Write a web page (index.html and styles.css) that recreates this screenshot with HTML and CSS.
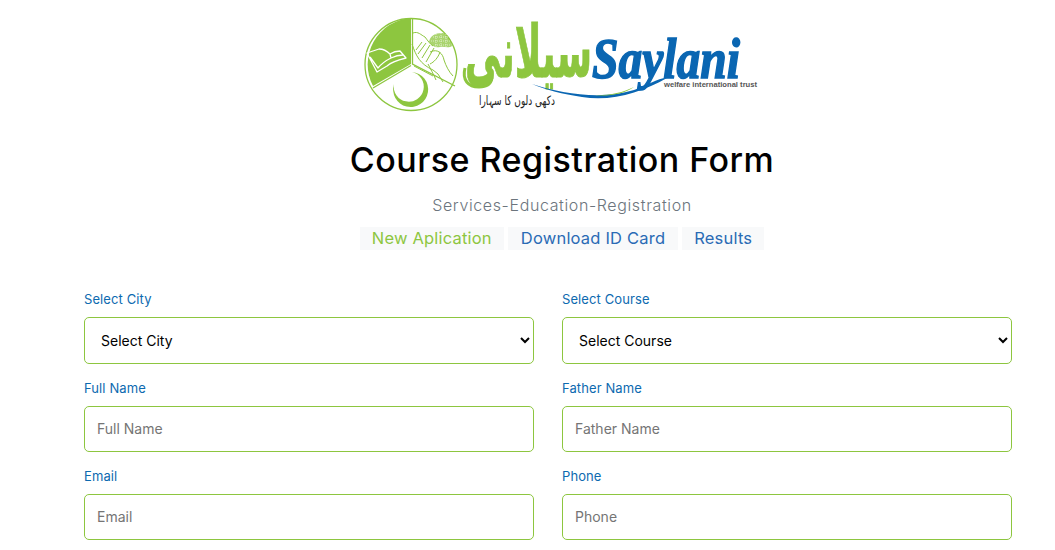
FILE: index.html
```html
<!DOCTYPE html>
<html lang="en">
<head>
<meta charset="utf-8">
<title>Course Registration Form</title>
<link rel="stylesheet" href="styles.css">
</head>
<body>
<header class="masthead">
  <svg class="logo" viewBox="350 5 420 120" width="420" height="120" aria-label="Saylani Welfare International Trust logo">
    <path d="M409 18V64L371 86A46.500 46.500 0 0 1 409 18Z" fill="#8dc63f"/>
    <circle cx="409" cy="64.500" r="46" fill="none" stroke="#8dc63f" stroke-width="1.300"/>
    <path d="M410.500 18V64L453 86M409 65.500L371 88" fill="none" stroke="#8dc63f" stroke-width="1.300"/>
    <path d="M365 53L377 49C381 49 385 51 388 54C391 52 394 51 398 51L404 58C396 60 389 62 385 66L375 72ZM368 57L376 68C380 63 385 60 389 58C393 56 397 55 401 55M388 54L389 58" fill="none" stroke="#fff" stroke-width="1.300" stroke-linejoin="round"/>
    <path d="M411 33C416 31 419 35 423 37C426 41 428 44 431 46M414 50L420 42M416 54L424 43M420 58L428 45M424 62L432 48M428 52C436 48 441 54 442 60C444 66 447 72 451 76M410 44C414 56 418 64 431 70L436 74L441 82M438 52C436 58 432 62 428 64M412 66L431 76M426 64C429 70 431 73 434 80" fill="none" stroke="#8dc63f" stroke-width="1"/>
    <path d="M427 42C428 36 433 33 440 33C445 33 449 38 450 46C446 49 442 46 438 47C433 48 430 46 427 42Z" fill="#8dc63f" opacity=".75"/>
    <path d="M429 41H448M431 37H446M433 45H449M434 34V47M439 33V47M444 34V48" fill="none" stroke="#fff" stroke-width=".6" stroke-dasharray="1 1"/>
    <path d="M392 84A17.500 17.500 0 1 0 410 72A15 15 0 1 1 392 84Z" fill="#8dc63f"/>
    <path d="M463 68C460 80 466 87 477 87C484 87 489 84 490 78" fill="none" stroke="#8dc63f" stroke-width="3"/>
    <text class="logo-urdu-big" x="463" y="77" textLength="127" lengthAdjust="spacingAndGlyphs">سیلانی</text>
    <text class="logo-name" x="590" y="78" textLength="148" lengthAdjust="spacingAndGlyphs">Saylani</text>
    <path d="M530 84C560 94 600 100 632 90C645 86 655 78 665 78C640 92 610 102 580 97C560 94 545 90 530 84Z" fill="#0a66b2"/>
    <path d="M590 95C605 96 620 93 632 87C622 94 606 97 590 95Z" fill="#8dc63f"/>
    <text class="logo-trust" x="662" y="87" textLength="93" lengthAdjust="spacingAndGlyphs">welfare international trust</text>
    <text class="logo-urdu-small" x="477" y="105" textLength="76" lengthAdjust="spacingAndGlyphs">دکھی دلوں کا سہارا</text>
  </svg>
  <h1 class="title">Course Registration Form</h1>
  <p class="subtitle">Services-Education-Registration</p>
  <nav class="tabs">
    <a class="tab tab-active tab-compact" href="#">New Aplication</a>
    <a class="tab" href="#">Download ID Card</a>
    <a class="tab tab-compact" href="#">Results</a>
  </nav>
</header>
<form class="form">
  <div class="field">
    <label class="label" for="city">Select City</label>
    <select class="control select" id="city"><option>Select City</option></select>
  </div>
  <div class="field">
    <label class="label" for="course">Select Course</label>
    <select class="control select" id="course"><option>Select Course</option></select>
  </div>
  <div class="field">
    <label class="label" for="name">Full Name</label>
    <input class="control" id="name" placeholder="Full Name">
  </div>
  <div class="field">
    <label class="label" for="father">Father Name</label>
    <input class="control" id="father" placeholder="Father Name">
  </div>
  <div class="field">
    <label class="label" for="email">Email</label>
    <input class="control" id="email" placeholder="Email">
  </div>
  <div class="field">
    <label class="label" for="phone">Phone</label>
    <input class="control" id="phone" placeholder="Phone">
  </div>
</form>
</body>
</html>
```
FILE: styles.css
```css
html, body {
  margin: 0;
  height: 100%;
  overflow: hidden;
  background: #fff;
}
body {
  font-family: "Inter", "Open Sans", sans-serif;
}
.masthead {
  display: flex;
  flex-direction: column;
  align-items: center;
  padding: 5px 0 0 69px;
}
.logo {
  display: block;
}
.logo-urdu-big {
  font: 700 72px "DejaVu Sans", sans-serif;
  fill: #8dc63f;
  stroke: #8dc63f;
  stroke-width: 1;
}
.logo-name {
  font: italic 700 58px "Liberation Serif", serif;
  fill: #0a66b2;
  stroke: #0a66b2;
  stroke-width: 1.600;
}
.logo-trust {
  font: 700 8px "Liberation Sans", sans-serif;
  fill: #555;
}
.logo-urdu-small {
  font: 400 13px "DejaVu Sans", sans-serif;
  fill: #222;
}
.title {
  margin: 9px 0 0;
  font-size: 34px;
  line-height: 52px;
  font-weight: 500;
  letter-spacing: .47px;
  color: #000;
  white-space: nowrap;
}
.subtitle {
  margin: 7px 0 0;
  font-size: 16px;
  line-height: 24px;
  font-weight: 300;
  letter-spacing: .62px;
  color: #6c757d;
}
.tabs {
  display: flex;
  gap: 4px;
  margin-top: 10px;
}
.tab {
  display: block;
  padding: 0 13px;
  font-size: 16.500px;
  line-height: 23px;
  letter-spacing: .2px;
  color: #2a6bb5;
  background: #f8f9fa;
  text-decoration: none;
}
.tab-compact {
  padding: 0 12px;
}
.tab-active {
  color: #8dc63f;
}
.form {
  display: grid;
  grid-template-columns: 450px 450px;
  column-gap: 28px;
  row-gap: 15px;
  padding: 40px 0 0 84px;
}
.field {
  display: flex;
  flex-direction: column;
  gap: 9px;
}
.label {
  font-size: 13px;
  line-height: 18px;
  letter-spacing: .1px;
  color: #0d6ab0;
}
.control {
  box-sizing: border-box;
  width: 100%;
  height: 46px;
  padding: 4px 12px 6px;
  font: 400 14px "Inter", sans-serif;
  color: #000;
  background: #fff;
  border: 1px solid #8dc63f;
  border-radius: 5px;
  outline: none;
}
.select {
  height: 47px;
  padding: 6px 12px;
}
```
